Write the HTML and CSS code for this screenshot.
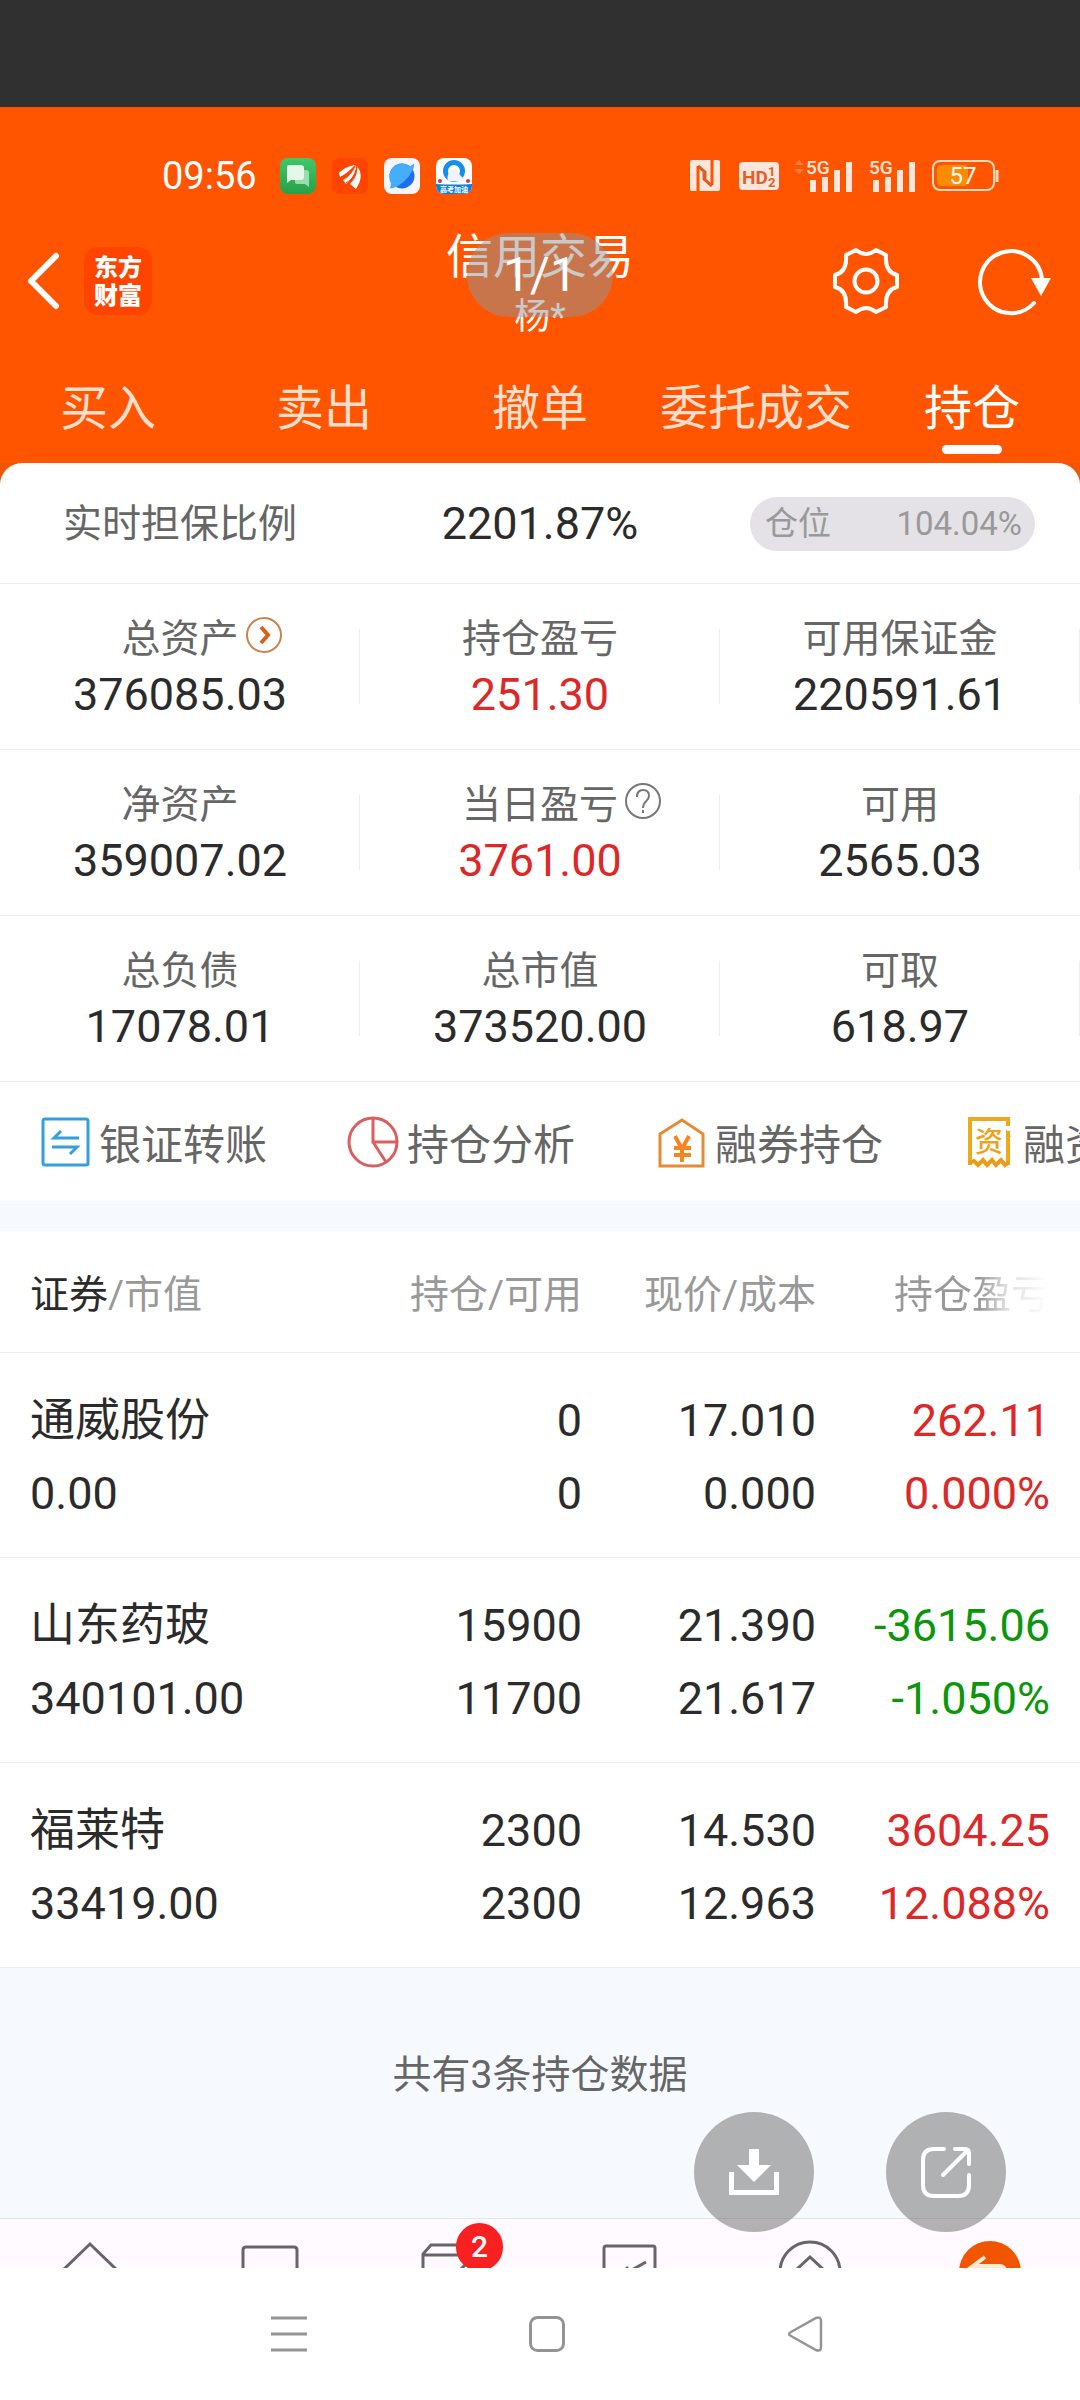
FILE: index.html
```html
<!DOCTYPE html>
<html lang="zh-CN">
<head>
  <meta charset="UTF-8" />
  <meta name="viewport" content="width=device-width, initial-scale=1.0"/>
  <title>信用交易</title>
  <link rel="stylesheet" href="styles.css">
</head>
<body>
  <div class="topbar"></div>

  <header class="header">
    <div class="status">
      <span class="time">09:56</span>
      <div class="apps">
        <svg width="36" height="36" viewBox="0 0 36 36">
          <defs><linearGradient id="gr" x2="0" y2="1"><stop stop-color="#3fc768"/><stop offset="1" stop-color="#28a04a"/></linearGradient></defs>
          <rect width="36" height="36" rx="8" fill="url(#gr)"/>
          <path d="M15 12h11a3 3 0 0 1 3 3v14l-4-3h-8a2 2 0 0 1-2-2z" fill="#9bdcae"/>
          <path d="M9 7h12a3 3 0 0 1 3 3v9a3 3 0 0 1-3 3H11l-4 3V9a2 2 0 0 1 2-2z" fill="#e3f8e9"/>
        </svg>
        <svg width="36" height="36" viewBox="0 0 36 36">
          <rect width="36" height="36" rx="8" fill="#ff4400"/>
          <path d="M7 15c5-5 10-7 16-8-4 4-9 9-15 12zM11 22c6-3 10-8 13-15 0 8-4 14-10 19zM18 26c5-5 8-11 7-18 6 8 4 15-1 23z" fill="#fff"/>
          <path d="M9 19c6-2 11-6 14-11M14 25c6-4 10-9 11-16" fill="none" stroke="#ff4400" stroke-width="1"/>
        </svg>
        <svg width="36" height="36" viewBox="0 0 36 36">
          <rect width="36" height="36" rx="8" fill="#f4f6fb"/>
          <circle cx="18" cy="18" r="12.500" fill="#1f6cf0"/>
          <path d="M5.500 18A12.500 12.500 0 0 1 26 8.500l4-3c1 4-3 11-9 17-5 5-11 8-15 8l1-5a12 12 0 0 1-1.500-7.500z" fill="#44aefc"/>
        </svg>
        <svg width="36" height="36" viewBox="0 0 36 36">
          <rect width="36" height="36" rx="8" fill="#fff"/>
          <circle cx="18" cy="13" r="8.500" fill="none" stroke="#1590ea" stroke-width="5"/>
          <path d="M12 23c-2-7 3-13 7-12 3 2 4 4 5 6l7 7z" fill="#f1f3f6"/>
          <circle cx="4" cy="23" r="2" fill="#d33a2c"/><circle cx="32" cy="23" r="2" fill="#d33a2c"/>
          <path d="M0 26q18 1 36 0v2a8 8 0 0 1-8 8H8a8 8 0 0 1-8-8z" fill="#0f7fdc"/>
          <text x="18" y="34" class="tiny">高考加油</text>
        </svg>
      </div>
      <div class="signals">
        <svg width="30" height="31" viewBox="0 0 30 31">
          <rect width="30" height="31" rx="2" fill="#ffe6dc"/>
          <path d="M8 31V6M22 0v25" fill="none" stroke="#ff5500" stroke-width="3"/>
          <path d="M8 6l7 6v8M22 26l-8-7v-7" fill="none" stroke="#d4602a" stroke-width="3"/>
        </svg>
        <svg class="hd" width="40" height="28" viewBox="0 0 40 28">
          <rect width="40" height="28" rx="4" fill="#ffe6dc"/>
          <text x="3" y="22" class="hd-text">HD</text>
          <text x="29" y="14" class="hd-num">1</text>
          <text x="29" y="25" class="hd-num">2</text>
        </svg>
        <svg width="60" height="34" viewBox="0 0 60 34">
          <path d="M0 6l5-5 5 5zM0 10h10l-5 5z" fill="#ff7b3c"/>
          <text x="12" y="15" class="net">5G</text>
          <path d="M16 21h6v12h-6zM28 18h6v15h-6zM40 11h6v22h-6zM52 3h6v30h-6z" fill="#ffe6dc"/>
        </svg>
        <svg class="sim2" width="48" height="34" viewBox="0 0 48 34">
          <text x="0" y="15" class="net">5G</text>
          <path d="M4 21h6v12H4zM16 18h6v15h-6zM28 11h6v22h-6zM40 3h6v30h-6z" fill="#ffe6dc"/>
        </svg>
        <svg class="battery" width="68" height="32" viewBox="0 0 68 32">
          <rect x="1" y="1" width="61" height="29" rx="7" fill="none" stroke="#ffd9bd" stroke-width="2"/>
          <rect x="5" y="5" width="31" height="21" rx="4" fill="#ff8c00"/>
          <path d="M65 10v12" stroke="#ffd9bd" stroke-width="3"/>
          <text x="31" y="24" class="level">57</text>
        </svg>
      </div>
    </div>

    <div class="titlebar">
      <div class="side">
        <button aria-label="返回">
          <svg width="34" height="58" viewBox="0 0 34 58"><path d="M28 4L3 29l25 25" fill="none" stroke="#fff" stroke-width="6" stroke-linecap="round" stroke-linejoin="round"/></svg>
        </button>
        <a class="logo" href="#">东方<br>财富</a>
      </div>
      <div class="title">
        <h1>信用交易</h1>
        <p>杨*</p>
      </div>
      <div class="side tools">
        <button aria-label="设置">
          <svg width="68" height="68" viewBox="0 0 68 68" fill="none" stroke="#fff" stroke-width="4" stroke-linejoin="round">
            <path d="M24 3Q34 11 44 3L54 8C53 20 57 26 65 28V40C57 42 53 48 54 60L44 65Q34 57 24 65L14 60C15 48 11 42 3 40V28C11 26 15 20 14 8Z"/>
            <circle cx="34" cy="34" r="11.500"/>
          </svg>
        </button>
        <button aria-label="刷新">
          <svg width="72" height="68" viewBox="0 0 72 68">
            <path d="M54 56A31 31 0 1 1 62 33" fill="none" stroke="#fff" stroke-width="4" stroke-linecap="round"/>
            <path d="M51 31h20L61 49z" fill="#fff"/>
          </svg>
        </button>
      </div>
      <div class="toast">1/1</div>
    </div>

    <nav class="tabs">
      <a href="#">买入</a>
      <a href="#">卖出</a>
      <a href="#">撤单</a>
      <a href="#">委托成交</a>
      <a href="#" class="active">持仓</a>
    </nav>
  </header>

  <main class="main">
    <div class="card-wrap">
      <section class="card">
        <div class="ratio">
          <span class="ratio-label">实时担保比例</span>
          <span class="num">2201.87%</span>
          <span class="position"><span>仓位</span><span>104.04%</span></span>
        </div>
        <div class="stats">
          <div class="stat">
            <span class="label">总资产
              <svg class="mark" width="38" height="38" viewBox="0 0 38 38" fill="none"><circle cx="19" cy="19" r="17" stroke="#c98450" stroke-width="2"/><path d="M16 11l7 8-7 8" stroke="#d9601a" stroke-width="4"/></svg>
            </span>
            <span class="num">376085.03</span>
          </div>
          <div class="stat"><span class="label">持仓盈亏</span><span class="num red">251.30</span></div>
          <div class="stat"><span class="label">可用保证金</span><span class="num">220591.61</span></div>
        </div>
        <div class="stats">
          <div class="stat"><span class="label">净资产</span><span class="num">359007.02</span></div>
          <div class="stat">
            <span class="label">当日盈亏
              <svg class="mark" width="38" height="38" viewBox="0 0 38 38" fill="none" stroke="#777" stroke-width="2"><circle cx="19" cy="19" r="17"/><path d="M13 15q0-7 6-7t6 6c0 5-6 5-6 12M19 28v3"/></svg>
            </span>
            <span class="num red">3761.00</span>
          </div>
          <div class="stat"><span class="label">可用</span><span class="num">2565.03</span></div>
        </div>
        <div class="stats">
          <div class="stat"><span class="label">总负债</span><span class="num">17078.01</span></div>
          <div class="stat"><span class="label">总市值</span><span class="num">373520.00</span></div>
          <div class="stat"><span class="label">可取</span><span class="num">618.97</span></div>
        </div>
        <div class="actions">
          <a href="#">
            <svg width="52" height="54" viewBox="0 0 52 54" fill="none" stroke="#349fdc" stroke-width="3"><rect x="4" y="4" width="45" height="46" rx="2"/><path d="M40 23H15l7-7M13 32h25l-7 7"/></svg>
            银证转账
          </a>
          <a href="#">
            <svg width="52" height="54" viewBox="0 0 52 54" fill="none" stroke="#dc5f5f" stroke-width="3"><circle cx="26" cy="27" r="24"/><path d="M26 3v24h24M26 27l13 20"/></svg>
            持仓分析
          </a>
          <a href="#">
            <svg width="52" height="54" viewBox="0 0 52 54" fill="none" stroke="#e58a35" stroke-width="3"><path d="M5 19L27 5l21 14v32H5z"/><path d="M20 21l7 13 7-13M19 33h17M19 40h17M27 33v14" stroke-width="4" stroke="#f5861f"/></svg>
            融券持仓
          </a>
          <a href="#">
            <svg width="52" height="54" viewBox="0 0 52 54"><path d="M7 50V4h38v7M45 16v34" fill="none" stroke="#eda91c" stroke-width="4"/><path d="M43 14l5 8h-5z" fill="#eda91c"/><path d="M6 48l5-2 4 4 5-5 4 5 5-5 4 5 5-5 4 5 4-3" fill="none" stroke="#eb9c17" stroke-width="4"/><text x="26" y="37" class="zi">资</text></svg>
            融资持仓
          </a>
        </div>
      </section>
    </div>

    <table class="holdings">
      <colgroup><col><col class="c-qty"><col class="c-price"><col class="c-profit"></colgroup>
      <thead>
        <tr><th><b>证券</b>/市值</th><th>持仓/可用</th><th>现价/成本</th><th class="fade">持仓盈亏</th></tr>
      </thead>
      <tbody>
        <tr>
          <td>通威股份<br>0.00</td>
          <td>0<br>0</td>
          <td>17.010<br>0.000</td>
          <td class="red">262.11<br>0.000%</td>
        </tr>
        <tr>
          <td>山东药玻<br>340101.00</td>
          <td>15900<br>11700</td>
          <td>21.390<br>21.617</td>
          <td class="green">-3615.06<br>-1.050%</td>
        </tr>
        <tr>
          <td>福莱特<br>33419.00</td>
          <td>2300<br>2300</td>
          <td>14.530<br>12.963</td>
          <td class="red">3604.25<br>12.088%</td>
        </tr>
      </tbody>
    </table>

    <p class="count">共有3条持仓数据</p>
  </main>

  <nav class="bottom">
    <a href="#" aria-label="首页"><svg width="72" height="49" viewBox="0 0 72 49"><path d="M7 53l29-28 29 28" fill="none" stroke="#666" stroke-width="3"/></svg></a>
    <a href="#" aria-label="行情"><svg width="72" height="49" viewBox="0 0 72 49"><path d="M9 53V31q0-3 3-3h48q3 0 3 3v22" fill="none" stroke="#666" stroke-width="3"/></svg></a>
    <a href="#" aria-label="消息">
      <svg width="72" height="49" viewBox="0 0 72 49"><path d="M9 53V35l8-9h44M9 36h40M44 53l12-12" fill="none" stroke="#666" stroke-width="3"/></svg>
      <span class="badge">2</span>
    </a>
    <a href="#" aria-label="自选"><svg width="72" height="49" viewBox="0 0 72 49"><path d="M10 53V29q0-2 2-2h47q2 0 2 2v24M32 48l4 4 16-9" fill="none" stroke="#666" stroke-width="3"/></svg></a>
    <a href="#" aria-label="发现"><svg width="72" height="49" viewBox="0 0 72 49" fill="none" stroke="#666" stroke-width="3"><circle cx="36" cy="53" r="30"/><path d="M22 51l14-13 14 13"/></svg></a>
    <a href="#" aria-label="交易"><svg width="72" height="49" viewBox="0 0 72 49"><circle cx="36" cy="53" r="31" fill="#f25500"/><path d="M31 38l-12 9h26q5 0 6 4" fill="none" stroke="#ffe9cf" stroke-width="4"/></svg></a>
  </nav>

  <div class="sysnav">
    <button aria-label="菜单"><svg width="36" height="38" viewBox="0 0 36 38"><path d="M0 3h36M0 19h36M0 35h36" stroke="#949494" stroke-width="3"/></svg></button>
    <button aria-label="主屏幕"><svg width="36" height="38" viewBox="0 0 36 38"><rect x="1.500" y="2.500" width="33" height="33" rx="7" fill="none" stroke="#949494" stroke-width="3"/></svg></button>
    <button aria-label="后退"><svg width="36" height="38" viewBox="0 0 36 38"><path d="M4 17L29 3q5-2 5 3v26q0 5-5 3L4 21q-4-2 0-4z" fill="none" stroke="#949494" stroke-width="2.500"/></svg></button>
  </div>

  <div class="floating">
    <button aria-label="下载"><svg width="52" height="52" viewBox="0 0 52 52"><path d="M21 3h10v16h12L26 36 9 19h12z" fill="#fff"/><path d="M3.500 26v20.500h45V26" fill="none" stroke="#fff" stroke-width="5"/></svg></button>
    <button aria-label="分享"><svg width="52" height="52" viewBox="0 0 52 52" fill="none" stroke="#fff" stroke-width="4" stroke-linecap="round"><path d="M24 3H14Q3 3 3 14v25q0 11 11 11h24q11 0 11-11V29M35 3h10q4 0 4 4v11M48 4L23 29"/></svg></button>
  </div>
</body>
</html>
```

FILE: styles.css
```css
:root {
  --orange: #ff5500;
  --pale: #f6faff;
  --line: #eeeeee;
  --text: #2b2b2b;
  --gray: #666666;
  --light: #999999;
  --red: #dc2828;
  --green: #0b960b;
}

* {
  box-sizing: border-box;
}

body {
  margin: 0;
  min-height: 100vh;
  display: flex;
  flex-direction: column;
  font-family: Roboto, "Noto Sans CJK SC", sans-serif;
  background: white;
  color: var(--text);
  overflow-x: hidden;
}

h1, p {
  margin: 0;
  font-weight: 400;
}

a {
  color: inherit;
  text-decoration: none;
}

button {
  border: 0;
  padding: 0;
  background: none;
  cursor: pointer;
}

svg {
  display: block;
  flex: none;
  overflow: visible;
}

.red {
  color: var(--red);
}

.green {
  color: var(--green);
}

.topbar {
  height: 107px;
  background: #303030;
}

/* header */
.header {
  background: var(--orange);
  color: white;
}

.status {
  display: flex;
  align-items: center;
  height: 120px;
  padding: 17px 80px 0 162px;
}

.time {
  font-size: 38px;
  line-height: 40px;
  width: 118px;
}

.apps {
  display: flex;
  gap: 16px;
}

.signals {
  display: flex;
  align-items: center;
  margin-left: auto;
}

.hd {
  margin: 0 15px 0 19px;
}

.battery, .sim2 {
  margin-left: 15px;
}

.tiny {
  font-size: 7px;
  font-weight: 700;
  fill: white;
  text-anchor: middle;
}

.hd-text {
  font-size: 19px;
  font-weight: 700;
  fill: #e0602a;
}

.hd-num {
  font-size: 13px;
  font-weight: 700;
  fill: #e0602a;
}

.net {
  font-size: 19px;
  font-weight: 500;
  fill: #ffe6dc;
}

.level {
  font-size: 24px;
  fill: white;
  text-anchor: middle;
}

.titlebar {
  position: relative;
  display: grid;
  grid-template-columns: 1fr auto 1fr;
  height: 118px;
  padding: 0 28px;
}

.side {
  display: flex;
  align-items: center;
  gap: 22px;
  height: 108px;
}

.tools {
  justify-content: flex-end;
  gap: 80px;
}

.logo {
  width: 68px;
  height: 68px;
  padding-top: 7px;
  border-radius: 14px;
  background: #ff4400;
  font-size: 24px;
  line-height: 28px;
  font-weight: 900;
  text-align: center;
}

.title {
  text-align: center;
}

.title h1 {
  font-size: 47px;
  line-height: 60px;
}

.title p {
  font-size: 36px;
  line-height: 60px;
}

.toast {
  position: absolute;
  top: 6px;
  left: 50%;
  width: 146px;
  margin-left: -73px;
  border-radius: 42px;
  background: rgba(150, 150, 150, 0.51);
  font-size: 48px;
  line-height: 84px;
  text-align: center;
}

.tabs {
  display: grid;
  grid-template-columns: repeat(5, 1fr);
  height: 118px;
  padding-top: 34px;
}

.tabs a {
  display: flex;
  flex-direction: column;
  align-items: center;
  font-size: 48px;
  line-height: 60px;
  color: #ffdfcc;
}

.tabs .active {
  color: white;
}

.tabs .active::after {
  content: "";
  width: 60px;
  height: 9px;
  margin-top: 6px;
  border-radius: 5px;
  background: white;
}

/* account card */
.main {
  flex: 1;
  background: var(--pale);
}

.card-wrap {
  background: #f05500;
}

.card {
  background: white;
  border-radius: 22px 22px 0 0;
  overflow: hidden;
}

.ratio {
  display: grid;
  grid-template-columns: 1fr auto 1fr;
  align-items: center;
  height: 121px;
  padding: 2px 45px 0;
  border-bottom: 1px solid var(--line);
}

.ratio-label, .label {
  font-size: 39px;
  line-height: 56px;
  color: var(--gray);
}

.ratio-label {
  padding-left: 18px;
}

.num {
  font-size: 45px;
  line-height: 56px;
}

.position {
  justify-self: end;
  display: flex;
  justify-content: space-between;
  width: 285px;
  padding: 0 13px 0 15px;
  border-radius: 27px;
  background: #e4e2e6;
  color: var(--light);
  font-size: 33px;
  line-height: 54px;
}

.stats {
  display: grid;
  grid-template-columns: repeat(3, 1fr);
  border-bottom: 1px solid var(--line);
}

.stat {
  display: flex;
  flex-direction: column;
  align-items: center;
  padding: 27px 0 26px;
  background: linear-gradient(var(--line), var(--line)) right center / 1px 75px no-repeat;
}

.label {
  position: relative;
}

.mark {
  position: absolute;
  top: 5px;
  left: 100%;
  margin-left: 6px;
}

.actions {
  display: flex;
  gap: 80px;
  height: 119px;
  padding-left: 39px;
  overflow: hidden;
}

.actions a {
  flex: none;
  display: flex;
  align-items: center;
  gap: 8px;
  font-size: 42px;
  color: var(--gray);
}

.zi {
  font-size: 28px;
  font-weight: 500;
  fill: #eda21c;
  text-anchor: middle;
}

/* holdings */
.holdings {
  width: 100%;
  margin-top: 30px;
  table-layout: fixed;
  border-collapse: collapse;
  background: white;
}

.c-qty {
  width: 252px;
}

.c-price {
  width: 234px;
}

.c-profit {
  width: 264px;
}

.holdings th, .holdings td {
  padding: 0;
  text-align: right;
  border-bottom: 1px solid var(--line);
}

.holdings th:first-child, .holdings td:first-child {
  padding-left: 30px;
  text-align: left;
}

.holdings th:last-child, .holdings td:last-child {
  padding-right: 30px;
}

.holdings th {
  height: 121px;
  font-size: 39px;
  font-weight: 400;
  color: var(--light);
}

.holdings th b {
  font-weight: 400;
  color: var(--text);
}

.holdings .fade {
  color: transparent;
  background: linear-gradient(to right, var(--light) 62%, #dddddd 72%, white 88%);
  -webkit-background-clip: text;
  background-clip: text;
}

.holdings td {
  padding: 31px 0 27px;
  font-size: 45px;
  line-height: 73px;
}

.count {
  padding: 77px 0 100px;
  text-align: center;
  font-size: 39px;
  line-height: 60px;
  color: var(--gray);
}

/* bottom bars */
.bottom {
  display: grid;
  grid-template-columns: repeat(6, 1fr);
  justify-items: center;
  border-top: 1px solid #e4e4e6;
  background: #fffaff;
  overflow: hidden;
}

.bottom a {
  position: relative;
}

.badge {
  position: absolute;
  top: 4px;
  left: 42px;
  width: 47px;
  border-radius: 24px;
  background: #f82020;
  color: white;
  font-size: 30px;
  font-weight: 500;
  line-height: 48px;
  text-align: center;
}

.sysnav {
  display: flex;
  justify-content: center;
  align-items: center;
  gap: 222px;
  height: 132px;
  padding-left: 14px;
}

.floating {
  position: fixed;
  right: 74px;
  bottom: 168px;
  display: flex;
  gap: 72px;
}

.floating button {
  display: flex;
  align-items: center;
  justify-content: center;
  width: 120px;
  height: 120px;
  border-radius: 50%;
  background: rgba(110, 110, 110, 0.52);
}
```
